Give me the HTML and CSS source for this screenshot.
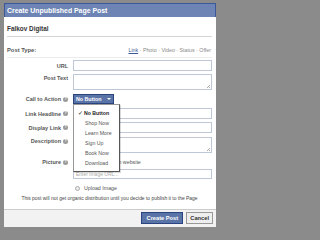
FILE: index.html
```html
<!DOCTYPE html>
<html>
<head>
<meta charset="utf-8">
<link rel="stylesheet" href="styles.css">
</head>
<body>
<div class="dialog">
  <div class="hd">Create Unpublished Page Post</div>
  <div class="bd">
    <div class="page">Falkov Digital</div>
    <div class="ptype">
      <span class="pt-label">Post Type:</span>
      <span class="types"><span class="on">Link</span> · Photo · Video · Status · Offer</span>
    </div>
    <div class="row r-url">
      <div class="lbl h11">URL</div>
      <div class="field"><div class="input h11"></div></div>
    </div>
    <div class="row r-text">
      <div class="lbl h8">Post Text</div>
      <div class="field"><div class="textarea"><span class="grip"></span></div></div>
    </div>
    <div class="row r-cta">
      <div class="lbl h10">Call to Action<span class="help">?</span></div>
      <div class="field cta">
        <div class="selbtn">No Button <span class="caret"></span></div>
        <div class="menu">
          <div class="mi sel"><span class="check">✓</span>No Button</div>
          <div class="mi">Shop Now</div>
          <div class="mi">Learn More</div>
          <div class="mi">Sign Up</div>
          <div class="mi">Book Now</div>
          <div class="mi">Download</div>
        </div>
      </div>
    </div>
    <div class="row r-lh">
      <div class="lbl h11">Link Headline<span class="help">?</span></div>
      <div class="field"><div class="input h11"></div></div>
    </div>
    <div class="row r-dl">
      <div class="lbl h11">Display Link<span class="help">?</span></div>
      <div class="field"><div class="input h11"></div></div>
    </div>
    <div class="row r-desc">
      <div class="lbl h8">Description<span class="help">?</span></div>
      <div class="field"><div class="textarea"><span class="grip"></span></div></div>
    </div>
    <div class="row r-pic">
      <div class="lbl h8">Picture<span class="help">?</span></div>
      <div class="field radio-line"><span class="radio"></span>Use image from website</div>
    </div>
    <div class="row r-img">
      <div class="lbl"></div>
      <div class="field"><div class="input h10 ph">Enter image URL...</div></div>
    </div>
    <div class="row r-up">
      <div class="lbl"></div>
      <div class="field radio-line"><span class="radio"></span>Upload Image</div>
    </div>
    <p class="note">This post will not get organic distribution until you decide to publish it to the Page</p>
  </div>
  <div class="ft">
    <span class="btn primary">Create Post</span>
    <span class="btn">Cancel</span>
  </div>
</div>
</body>
</html>
```

FILE: styles.css
```css
* { box-sizing: border-box; }
html, body { margin: 0; height: 231px; overflow: hidden; }
body {
  background: #8b8b8b;
  padding: 3px 3px 0 4px;
  font-family: "Liberation Sans", Arial, sans-serif;
  color: #333;
}
.dialog {
  width: 212px;
  height: 224px;
  background: #fff;
  display: flex;
  flex-direction: column;
}
.hd {
  height: 14px;
  background: #6d84b4;
  border: 1px solid #3b5998;
  border-bottom: none;
  color: #fff;
  font-weight: bold;
  font-size: 6.9px;
  line-height: 13px;
  padding-left: 2px;
}
.bd {
  flex: 1;
  padding: 0 4px 0 3px;
}
.page {
  padding-top: 8px;
  line-height: 8px;
  padding-bottom: 3px;
  font-weight: bold;
  font-size: 6.4px;
  color: #333;
  border-bottom: 1px solid #d4d4d4;
}
.ptype {
  display: flex;
  justify-content: space-between;
  padding-top: 9px;
  line-height: 8px;
  padding-bottom: 3px;
  border-bottom: 1px solid #ececec;
  font-size: 6px;
}
.pt-label { font-weight: bold; color: #555; font-size: 5.8px; }
.types { color: #888; font-size: 5.3px; padding-right: 1px; }
.types .on { color: #3b5998; text-decoration: underline; }
.row {
  display: flex;
  align-items: flex-start;
}
.lbl {
  width: 61px;
  margin-right: 5px;
  display: flex;
  justify-content: flex-end;
  align-items: center;
  font-weight: bold;
  font-size: 5.5px;
  color: #555;
  white-space: nowrap;
}
.h8 { height: 8px; }
.h10 { height: 10px; }
.h11 { height: 11px; }
.field { flex: 1; position: relative; }
.help {
  display: inline-block;
  width: 5px;
  height: 5px;
  border-radius: 50%;
  background: #999;
  color: #fff;
  font-size: 3.5px;
  line-height: 5px;
  text-align: center;
  margin-left: 2px;
}
.input {
  border: 1px solid #bdc7d8;
  background: #fff;
}
.input.h10 { height: 10px; }
.ph { color: #aaa; font-size: 5px; line-height: 8px; padding-left: 2px; font-weight: normal; }
.textarea {
  height: 16px;
  border: 1px solid #bdc7d8;
  position: relative;
}
.grip {
  position: absolute;
  right: 1px;
  bottom: 1px;
  width: 3px;
  height: 3px;
  background: linear-gradient(135deg, transparent 45%, #aaa 45%, #aaa 60%, transparent 60%, transparent 75%, #aaa 75%);
}
.r-url { margin-top: 2px; }
.r-text { margin-top: 3px; }
.r-cta { margin-top: 4px; }
.r-lh { margin-top: 4px; }
.r-dl { margin-top: 3px; }
.r-desc { margin-top: 4px; }
.r-pic { margin-top: 5px; }
.r-img { margin-top: 3px; }
.r-up { margin-top: 5px; }
.cta { display: flex; }
.selbtn {
  display: flex;
  align-items: center;
  width: 41px;
  height: 10px;
  background: #5b74a8;
  border: 1px solid #29447e;
  color: #fff;
  font-weight: bold;
  font-size: 5.3px;
  padding-left: 2px;
  white-space: nowrap;
}
.caret {
  margin-left: 5px;
  width: 0;
  height: 0;
  border-left: 2px solid transparent;
  border-right: 2px solid transparent;
  border-top: 2px solid #fff;
}
.menu {
  position: absolute;
  left: 0;
  top: 10px;
  width: 47px;
  padding: 3px 0;
  background: #fff;
  border: 1px solid #999;
  border-right-color: #555;
  border-bottom-color: #555;
  box-shadow: 1px 1px 0 rgba(0,0,0,.15);
  z-index: 2;
}
.mi {
  height: 10px;
  line-height: 10px;
  font-size: 5.2px;
  color: #555;
  padding-left: 11px;
  position: relative;
  white-space: nowrap;
}
.mi.sel { font-weight: bold; color: #222; padding-left: 10px; }
.check { position: absolute; left: 4px; font-weight: normal; font-size: 5.5px; }
.radio-line {
  display: flex;
  align-items: center;
  height: 8px;
  font-size: 5.3px;
  color: #555;
  white-space: nowrap;
}
.radio {
  width: 5px;
  height: 5px;
  border-radius: 50%;
  border: 1px solid #aaa;
  background: #eee;
  margin-left: 2px;
  margin-right: 4px;
  flex: none;
}
.note {
  margin: 3px 0 0 0;
  line-height: 8px;
  font-size: 4.95px;
  text-align: center;
  color: #444;
  white-space: nowrap;
}
.ft {
  height: 18px;
  background: #f2f2f2;
  border-top: 1px solid #ccc;
  display: flex;
  justify-content: flex-end;
  align-items: flex-start;
  padding: 2px 3px 0 0;
  gap: 3px;
}
.btn {
  height: 12px;
  line-height: 10px;
  border: 1px solid #999;
  background: #eee;
  color: #333;
  font-weight: bold;
  font-size: 5.7px;
  padding: 0 3px;
  text-align: center;
}
.btn.primary {
  width: 42px;
  background: #5b74a8;
  border-color: #29447e;
  color: #fff;
}
```
